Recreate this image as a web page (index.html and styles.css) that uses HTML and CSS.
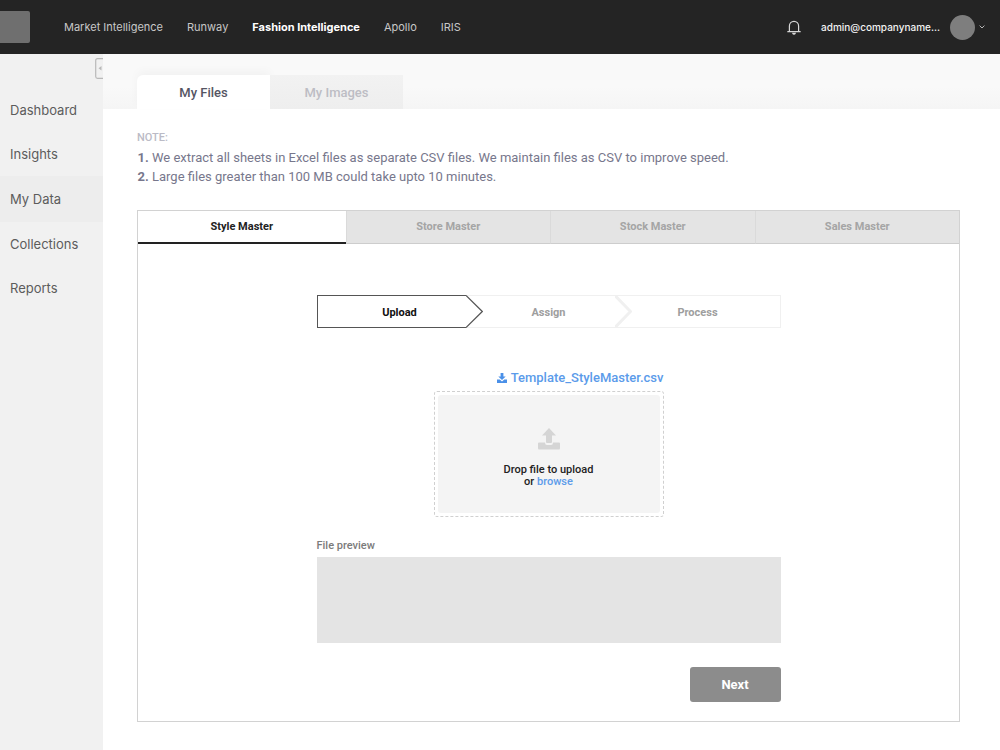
FILE: index.html
```html
<!DOCTYPE html>
<html lang="en">

<head>
    <meta charset="UTF-8">
    <meta name="viewport" content="width=device-width, initial-scale=1.0">
    <title>My Data</title>
    <link rel="stylesheet" href="styles.css">
</head>

<body>
    <header class="topbar">
        <div class="logo"></div>
        <nav class="main-nav">
            <a href="#">Market Intelligence</a>
            <a href="#">Runway</a>
            <a href="#" class="active">Fashion Intelligence</a>
            <a href="#">Apollo</a>
            <a href="#">IRIS</a>
        </nav>
        <button class="icon-button" type="button" aria-label="Notifications">
            <svg width="14" height="15" viewBox="0 0 14 15" fill="none" stroke="#d6d6d6" stroke-width="1.2" stroke-linecap="round">
                <path d="M.8 11.7h12.4M2.4 11.5V6a4.6 4.6 0 0 1 9.2 0v5.5" />
                <path d="M5.8 13.3a1.3 1.3 0 0 0 2.4 0z" fill="#d6d6d6" />
            </svg>
        </button>
        <button class="account" type="button">
            <span class="email">admin@companyname...</span>
            <span class="avatar"></span>
            <svg width="6" height="4" viewBox="0 0 6 4" fill="none" stroke="#b5b5b5">
                <path d="M.6.6 3 3 5.4.6" />
            </svg>
        </button>
    </header>

    <div class="layout">
        <aside class="sidebar">
            <button class="collapse" type="button" aria-label="Collapse menu">
                <svg width="8" height="21" viewBox="0 0 8 21" fill="none" stroke="#b9b9b9">
                    <path d="M8 .7H2.5Q.7.7.7 2.5v16q0 1.8 1.8 1.8H8" stroke-width="1.2" />
                    <path d="M6.500 8 3.500 10.300 6.500 12.500z" fill="#b9b9b9" stroke="none" />
                </svg>
            </button>
            <nav class="side-nav">
                <a href="#">Dashboard</a>
                <a href="#">Insights</a>
                <a href="#" class="active">My Data</a>
                <a href="#">Collections</a>
                <a href="#">Reports</a>
            </nav>
        </aside>

        <main class="content">
            <div class="page-tabs">
                <button class="page-tab active" type="button">My Files</button>
                <button class="page-tab" type="button">My Images</button>
            </div>

            <section class="note">
                <h2>NOTE:</h2>
                <ol>
                    <li>We extract all sheets in Excel files as separate CSV files. We maintain files as CSV to improve speed.</li>
                    <li>Large files greater than 100 MB could take upto 10 minutes.</li>
                </ol>
            </section>

            <section class="card">
                <div class="card-tabs">
                    <button class="card-tab active" type="button">Style Master</button>
                    <button class="card-tab" type="button">Store Master</button>
                    <button class="card-tab" type="button">Stock Master</button>
                    <button class="card-tab" type="button">Sales Master</button>
                </div>

                <form class="upload-form">
                    <div class="steps">
                        <span class="step first">Upload</span>
                        <svg width="17" height="33" viewBox="0 0 17 33" fill="none">
                            <path d="M0 .5h17M0 32.500h17" stroke="#f0f0f0" />
                            <path d="M0 .5 16.300 16.500 0 32.500" fill="#fff" stroke="#555" stroke-width="1.2" />
                        </svg>
                        <span class="step">Assign</span>
                        <svg width="17" height="33" viewBox="0 0 17 33" fill="none">
                            <path d="M0 .5h17M0 32.500h17" stroke="#f0f0f0" />
                            <path d="M0 .5 15.500 16.500 0 32.500" stroke="#f0f0f0" stroke-width="3" />
                        </svg>
                        <span class="step last">Process</span>
                    </div>

                    <div class="upload">
                        <a class="template" href="#">
                            <svg width="10" height="10" viewBox="0 0 10 10" fill="#4a90e8">
                                <path d="M3.600 0h2.800v3.400h2.300L5 7 1.300 3.400h2.300z" />
                                <path d="M0 6.600h2.700L5 8.600l2.300-2H10V10H0z" />
                            </svg>
                            Template_StyleMaster.csv
                        </a>
                        <div class="dropzone">
                            <div class="dropzone-inner">
                                <svg width="22" height="22" viewBox="0 0 22 22" fill="#d5d5d5">
                                    <path d="M11 0 18 7.500h-4V14q0 1-1 1H9q-1 0-1-1V7.500H4z" />
                                    <path d="M1 14.500h6Q7 17 9 17h4q2 0 2-2.500h6q1 0 1 1V20q0 1.500-1 1.500H1Q0 21.500 0 20v-4.500q0-1 1-1z" />
                                </svg>
                                <p>Drop file to upload<br>or <label for="file">browse</label></p>
                                <input type="file" id="file" class="file-input">
                            </div>
                        </div>
                    </div>

                    <h3 class="preview-title">File preview</h3>
                    <div class="preview"></div>
                    <button class="next" type="button">Next</button>
                </form>
            </section>
        </main>
    </div>
</body>

</html>
```
FILE: styles.css
```css
* {
    box-sizing: border-box;
}

body {
    margin: 0;
    min-height: 100vh;
    display: flex;
    flex-direction: column;
    background: #fff;
    font-family: Roboto, sans-serif;
    font-size: 13px;
}

a {
    text-decoration: none;
}

button {
    border: none;
    padding: 0;
    background: none;
    font-family: inherit;
    cursor: pointer;
}

svg {
    display: block;
    flex: none;
}

/* Top bar */
.topbar {
    display: flex;
    align-items: center;
    height: 54px;
    padding-right: 15px;
    background: #242424;
    font-family: Inter, sans-serif;
    font-size: 11px;
}

.logo {
    width: 30px;
    height: 32px;
    border-radius: 0 2px 2px 0;
    background: #6f6f6f;
}

.main-nav {
    display: flex;
    flex: 1;
    gap: 24px;
    margin-left: 34px;
}

.main-nav a {
    color: #c8c8c8;
}

.main-nav a.active {
    color: #fff;
    font-weight: 700;
}

.icon-button {
    margin-right: 20px;
}

.account {
    display: flex;
    align-items: center;
    color: #f2f2f2;
    font-size: 10px;
    font-weight: 500;
}

.avatar {
    width: 25px;
    height: 25px;
    margin: 0 4px 0 10px;
    border-radius: 50%;
    background: #7e7e7e;
}

.layout {
    display: flex;
    flex: 1;
}

/* Side menu */
.sidebar {
    flex: none;
    width: 103px;
    background: #f1f1f1;
}

.collapse {
    display: block;
    margin: 4px 0 9px auto;
}

.side-nav {
    display: flex;
    flex-direction: column;
    font-family: Inter, sans-serif;
}

.side-nav a {
    padding-left: 10px;
    line-height: 44px;
    color: #5c5c5c;
}

.side-nav a.active {
    line-height: 46px;
    background: #ededed;
}

/* Page tabs */
.content {
    flex: 1;
    min-width: 0;
}

.page-tabs {
    display: flex;
    padding: 21px 34px 0;
    background: linear-gradient(#f9f9f9 60%, #f5f5f5);
}

.page-tab {
    width: 133px;
    height: 34px;
    background: linear-gradient(#f2f2f2, #eee);
    color: #bdbdc4;
    font-size: 13px;
    font-weight: 500;
}

.page-tab.active {
    border-radius: 6px 0 0 0;
    background: #fff;
    box-shadow: 0 -4px 10px rgba(0, 0, 0, 0.03);
    color: #555563;
}

/* Note */
.note {
    padding: 19px 40px 24px 34px;
    color: #77778c;
}

.note h2 {
    margin: 0;
    color: #bbbbc6;
    font-size: 11px;
    line-height: 20px;
    font-weight: 500;
}

.note ol {
    margin: 0;
    padding-left: 15px;
    line-height: 19px;
}

.note li::marker {
    font-weight: 700;
}

/* Card */
.card {
    margin: 0 40px 28px 34px;
    border: 1px solid #d2d2d2;
}

.card-tabs {
    display: flex;
    height: 33px;
}

.card-tab {
    flex: 1;
    padding-bottom: 1px;
    border-bottom: 1px solid #cdcdcd;
    border-left: 1px solid #dadada;
    background: #e4e4e4;
    color: #a5a5a5;
    font-size: 11px;
    font-weight: 700;
}

.card-tab.active {
    padding: 0 2px 1px;
    border-left: none;
    border-bottom-color: #222;
    background: #fff;
    box-shadow: inset 0 -1px #222;
    color: #222;
}

.upload-form {
    display: flex;
    flex-direction: column;
    width: 464px;
    max-width: 100%;
    margin: 0 auto;
    padding: 51px 0 19px;
}

.steps {
    display: flex;
}

.step {
    flex: 1;
    height: 33px;
    border: 1px solid #f0f0f0;
    border-width: 1px 0;
    color: #9e9e9e;
    font-size: 11px;
    line-height: 33px;
    font-weight: 700;
    text-align: center;
}

.step.first {
    padding-left: 16px;
    border-color: #555;
    border-left-width: 1px;
    color: #111;
}

.step.last {
    padding-right: 16px;
    border-right-width: 1px;
}

/* Upload */
.upload {
    width: 230px;
    margin: 40px auto 0;
}

.template {
    display: flex;
    align-items: center;
    justify-content: flex-end;
    gap: 4px;
    line-height: 20px;
    color: #5b9bea;
    font-weight: 500;
}

.dropzone {
    margin-top: 3px;
    padding: 3px;
    border: 1px dashed #d0d0d0;
    border-radius: 3px;
}

.dropzone-inner {
    display: flex;
    flex-direction: column;
    align-items: center;
    height: 118px;
    padding-top: 33px;
    border-radius: 3px;
    background: #f4f4f4;
}

.dropzone p {
    margin: 14px 0 0;
    color: #222;
    font-size: 11px;
    line-height: 12px;
    font-weight: 500;
    text-align: center;
}

.dropzone label {
    color: #5b9bea;
    cursor: pointer;
}

.file-input {
    width: 1px;
    height: 1px;
    opacity: 0;
}

.preview-title {
    margin: 19px 0 1px;
    color: #7b7b7b;
    font-size: 11px;
    line-height: 20px;
    font-weight: 500;
}

.preview {
    height: 86px;
    background: #e4e4e4;
}

.next {
    align-self: flex-end;
    width: 91px;
    height: 35px;
    margin-top: 24px;
    border-radius: 3px;
    background: #8c8c8c;
    color: #fff;
    font-size: 13px;
    font-weight: 700;
}
```
